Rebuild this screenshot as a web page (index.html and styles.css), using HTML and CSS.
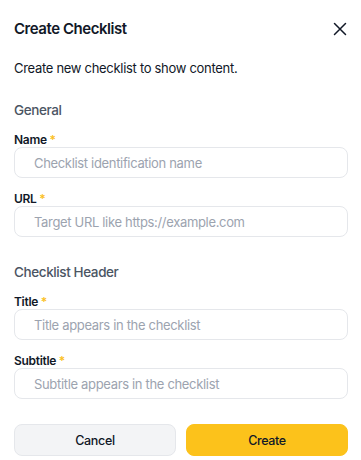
FILE: index.html
```html
<!DOCTYPE html>
<html lang="en">
<head>
    <meta charset="UTF-8">
    <meta name="viewport" content="width=device-width, initial-scale=1.0">
    <title>Create Checklist</title>
    <link rel="stylesheet" href="styles.css">
</head>
<body>
    <div class="dialog">
        <div class="dialog-header">
            <h2 class="dialog-title">Create Checklist</h2>
            <button class="close-btn" aria-label="Close">
                <svg width="14" height="14" viewBox="0 0 14 14">
                    <path d="M1.5 1.5L12.5 12.5M12.5 1.5L1.5 12.5" stroke="#111827" stroke-width="1.5" stroke-linecap="round"/>
                </svg>
            </button>
        </div>
        <p class="dialog-desc">Create new checklist to show content.</p>

        <div class="section">
            <h3 class="section-title">General</h3>
            <div class="field">
                <label class="label">Name <span class="req">*</span></label>
                <input class="input" type="text" placeholder="Checklist identification name">
            </div>
            <div class="field">
                <label class="label">URL <span class="req">*</span></label>
                <input class="input" type="text" placeholder="Target URL like https://example.com">
            </div>
        </div>

        <div class="section">
            <h3 class="section-title">Checklist Header</h3>
            <div class="field">
                <label class="label">Title <span class="req">*</span></label>
                <input class="input" type="text" placeholder="Title appears in the checklist">
            </div>
            <div class="field">
                <label class="label">Subtitle <span class="req">*</span></label>
                <input class="input" type="text" placeholder="Subtitle appears in the checklist">
            </div>
        </div>

        <div class="actions">
            <button class="btn btn-cancel">Cancel</button>
            <button class="btn btn-create">Create</button>
        </div>
    </div>
</body>
</html>
```

FILE: styles.css
```css
body {
    margin: 0;
    padding: 0;
    font-family: Inter, "Noto Sans", sans-serif;
    background-color: #ffffff;
    color: #111827;
}
.dialog {
    padding: 18px 13px 0 14px;
    display: flex;
    flex-direction: column;
}
.dialog-header {
    display: flex;
    align-items: center;
    justify-content: space-between;
    height: 22px;
}
.dialog-title {
    margin: 0;
    font-size: 15px;
    font-weight: 600;
    line-height: 22px;
    letter-spacing: -0.45px;
}
.close-btn {
    border: none;
    background: none;
    padding: 0;
    width: 14px;
    height: 14px;
    margin-right: 1px;
    display: flex;
}
.dialog-desc {
    margin: 18px 0 22px;
    font-size: 13px;
    line-height: 20px;
    letter-spacing: -0.3px;
    color: #111827;
}
.section {
    display: flex;
    flex-direction: column;
    gap: 14px;
    margin-bottom: 25px;
}
.section:last-of-type {
    margin-bottom: 14px;
}
.section-title {
    margin: 0 0 -1px;
    font-size: 13.5px;
    font-weight: 500;
    line-height: 20px;
    letter-spacing: -0.4px;
    color: #4b5563;
}
.field {
    display: flex;
    flex-direction: column;
}
.label {
    font-size: 12px;
    font-weight: 600;
    line-height: 14px;
    letter-spacing: -0.3px;
    color: #111827;
}
.req {
    color: #fbbf24;
}
.input {
    box-sizing: border-box;
    height: 31px;
    border: 1px solid #e5e7eb;
    border-radius: 8px;
    padding: 0 19px;
    font-family: inherit;
    font-size: 13px;
    letter-spacing: -0.33px;
    color: #111827;
    background: #fff;
    outline: none;
}
.input::placeholder {
    color: #9ca3af;
}
.actions {
    display: grid;
    grid-template-columns: 1fr 1fr;
    gap: 10px;
}
.btn {
    height: 32px;
    border-radius: 8px;
    font-family: inherit;
    font-size: 12.5px;
    font-weight: 500;
    letter-spacing: -0.35px;
    color: #111827;
}
.btn-cancel {
    background: #f3f4f6;
    border: 1px solid #e5e7eb;
}
.btn-create {
    background: #fcc21b;
    border: 1px solid #fcc21b;
}
```
